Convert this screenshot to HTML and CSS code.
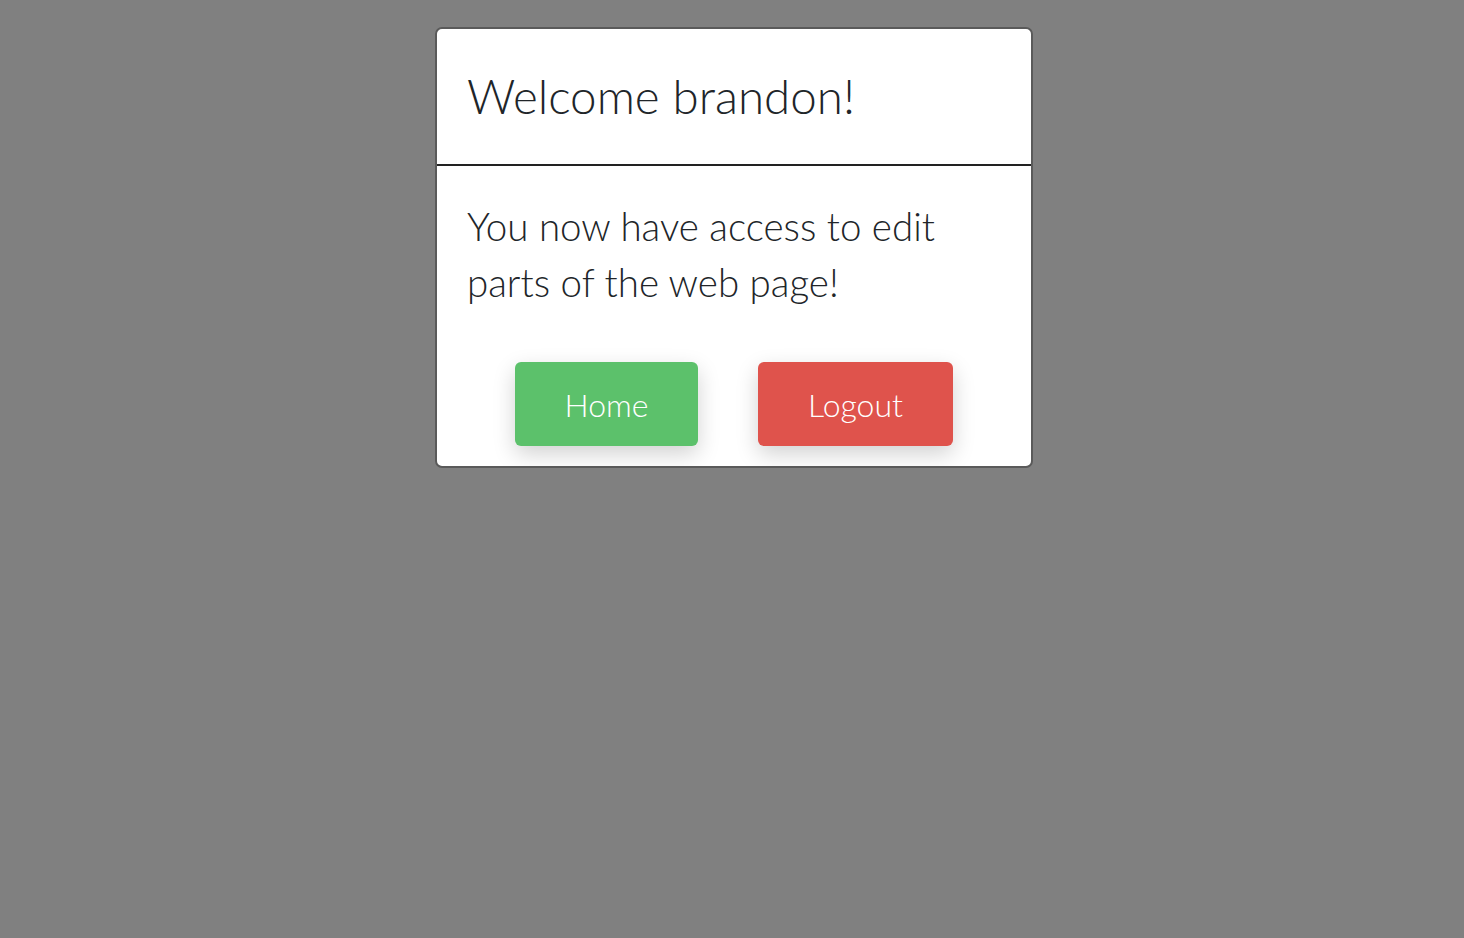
FILE: index.html
```html
<!DOCTYPE html>
<html>
<head>
<meta charset="utf-8">
<link rel="stylesheet" href="styles.css">
</head>
<body>
<div class="page">
  <div class="modal">
    <div class="modal-header">
      <h1 class="title">Welcome brandon!</h1>
    </div>
    <div class="modal-body">
      <p class="message">You now have access to edit parts of the web page!</p>
      <div class="actions">
        <a class="btn btn-home" href="#">Home</a>
        <a class="btn btn-logout" href="#">Logout</a>
      </div>
    </div>
  </div>
</div>
</body>
</html>
```

FILE: styles.css
```css
html, body {
  margin: 0;
  padding: 0;
  height: 100%;
}
body {
  background: #808080;
  font-family: Lato, "Liberation Sans", sans-serif;
  color: #212529;
}
.page {
  display: flex;
  justify-content: center;
  padding: 27px 0 0 4px;
}
.modal {
  width: 594px;
  background: #fff;
  border: 2px solid #5a5a5a;
  border-radius: 7px;
  overflow: hidden;
}
.modal-header {
  padding: 38px 30px 40px;
  border-bottom: 2px solid #222;
}
.title {
  margin: 0;
  font-weight: 300;
  font-size: 47.5px;
  line-height: 57px;
}
.modal-body {
  padding: 32px 30px 20px;
}
.message {
  margin: 0;
  font-weight: 300;
  font-size: 38.5px;
  line-height: 56px;
}
.actions {
  display: flex;
  justify-content: center;
  gap: 60px;
  margin-top: 52px;
}
.btn {
  display: flex;
  align-items: center;
  justify-content: center;
  width: 183px;
  height: 84px;
  box-sizing: border-box;
  font-size: 32px;
  font-weight: 300;
  color: #fff;
  text-decoration: none;
  border-radius: 6px;
  box-shadow: 0 8px 22px rgba(0,0,0,0.18);
}
.btn-home {
  background: #5cc16b;
}
.btn-logout {
  width: 195px;
  background: #df534c;
}
```
